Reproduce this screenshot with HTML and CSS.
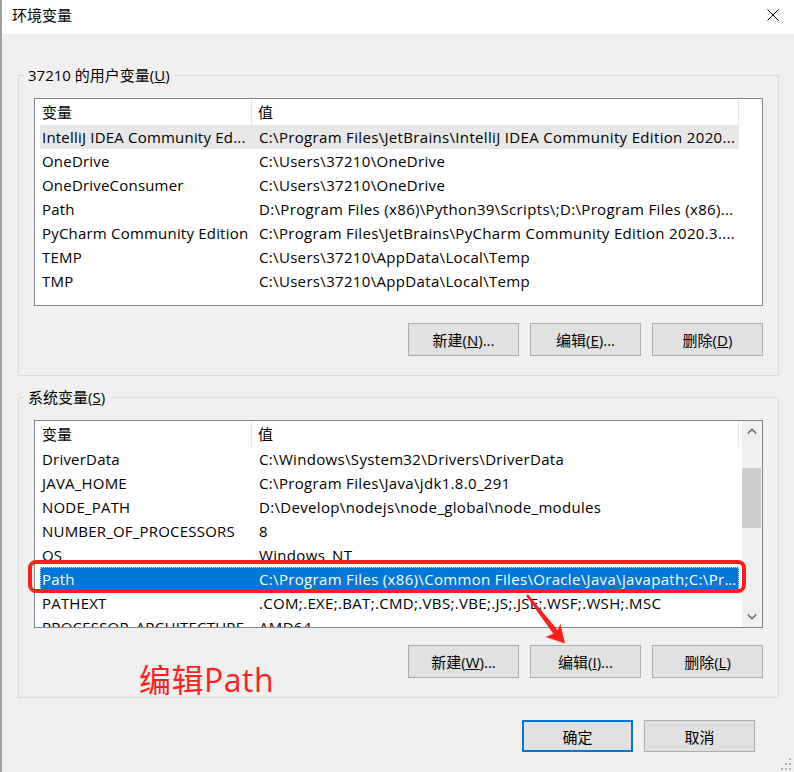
FILE: index.html
```html
<!DOCTYPE html>
<html lang="zh-CN">
<head>
<meta charset="utf-8">
<title>环境变量</title>
<link rel="stylesheet" href="styles.css">
</head>
<body>
<div class="window">
  <div class="titlebar">
    <span class="title">环境变量</span>
    <svg class="close" width="12" height="12" viewBox="0 0 12 12"><path d="M0.5 0.5 L11.5 11.5 M11.5 0.5 L0.5 11.5" stroke="#000" stroke-width="1" fill="none"/></svg>
  </div>
  <div class="content">
    <fieldset class="group">
      <legend>37210 的用户变量(<u>U</u>)</legend>
      <div class="list">
        <div class="list-main">
          <div class="list-head"><div class="hcell c1">变量</div><div class="hcell c2">值</div></div>
          <div class="row inactive"><span class="cell c1">IntelliJ IDEA Community Ed...</span><span class="cell c2">C:\Program Files\JetBrains\IntelliJ IDEA Community Edition 2020...</span></div>
          <div class="row"><span class="cell c1">OneDrive</span><span class="cell c2">C:\Users\37210\OneDrive</span></div>
          <div class="row"><span class="cell c1">OneDriveConsumer</span><span class="cell c2">C:\Users\37210\OneDrive</span></div>
          <div class="row"><span class="cell c1">Path</span><span class="cell c2">D:\Program Files (x86)\Python39\Scripts\;D:\Program Files (x86)...</span></div>
          <div class="row"><span class="cell c1">PyCharm Community Edition</span><span class="cell c2">C:\Program Files\JetBrains\PyCharm Community Edition 2020.3....</span></div>
          <div class="row"><span class="cell c1">TEMP</span><span class="cell c2">C:\Users\37210\AppData\Local\Temp</span></div>
          <div class="row"><span class="cell c1">TMP</span><span class="cell c2">C:\Users\37210\AppData\Local\Temp</span></div>
        </div>
      </div>
      <div class="btns">
        <button class="btn">新建(<u>N</u>)...</button>
        <button class="btn">编辑(<u>E</u>)...</button>
        <button class="btn">删除(<u>D</u>)</button>
      </div>
    </fieldset>

    <fieldset class="group group2">
      <legend>系统变量(<u>S</u>)</legend>
      <div class="list">
        <div class="list-main">
          <div class="list-head"><div class="hcell c1">变量</div><div class="hcell c2">值</div></div>
          <div class="row"><span class="cell c1">DriverData</span><span class="cell c2">C:\Windows\System32\Drivers\DriverData</span></div>
          <div class="row"><span class="cell c1">JAVA_HOME</span><span class="cell c2">C:\Program Files\Java\jdk1.8.0_291</span></div>
          <div class="row"><span class="cell c1">NODE_PATH</span><span class="cell c2">D:\Develop\nodejs\node_global\node_modules</span></div>
          <div class="row"><span class="cell c1">NUMBER_OF_PROCESSORS</span><span class="cell c2">8</span></div>
          <div class="row"><span class="cell c1">OS</span><span class="cell c2">Windows_NT</span></div>
          <div class="row selected"><span class="cell c1">Path</span><span class="cell c2">C:\Program Files (x86)\Common Files\Oracle\Java\javapath;C:\Pr...</span></div>
          <div class="row"><span class="cell c1">PATHEXT</span><span class="cell c2">.COM;.EXE;.BAT;.CMD;.VBS;.VBE;.JS;.JSE;.WSF;.WSH;.MSC</span></div>
          <div class="row"><span class="cell c1">PROCESSOR_ARCHITECTURE</span><span class="cell c2">AMD64</span></div>
        </div>
        <div class="scrollbar">
          <div class="sb-btn"><svg width="10" height="6" viewBox="0 0 10 6"><path d="M0.8 5.4 L5 1.2 L9.2 5.4" stroke="#606060" stroke-width="1.4" fill="none"/></svg></div>
          <div class="sb-track"><div class="sb-thumb"></div></div>
          <div class="sb-btn"><svg width="10" height="6" viewBox="0 0 10 6"><path d="M0.8 0.6 L5 4.8 L9.2 0.6" stroke="#606060" stroke-width="1.4" fill="none"/></svg></div>
        </div>
      </div>
      <div class="btns">
        <button class="btn">新建(<u>W</u>)...</button>
        <button class="btn">编辑(<u>I</u>)...</button>
        <button class="btn">删除(<u>L</u>)</button>
      </div>
    </fieldset>

    <div class="footer">
      <button class="btn btn-foot primary">确定</button>
      <button class="btn btn-foot">取消</button>
    </div>
  </div>

  <div class="anno-box"></div>
  <svg class="anno-arrow" width="56" height="60" viewBox="520 588 56 60"><polygon points="526,595.8 553.3,633.8 545.6,637 565,643.5 560.4,624 557.7,630.3 528,594.2" fill="#ff1f1f"/></svg>
  <div class="anno-text">编辑Path</div>
  <svg class="grip" width="12" height="12" viewBox="0 0 12 12" fill="#b4b4b4">
    <rect x="10" y="0" width="2" height="2"/>
    <rect x="6" y="5" width="2" height="2"/><rect x="10" y="5" width="2" height="2"/>
    <rect x="2" y="10" width="2" height="2"/><rect x="6" y="10" width="2" height="2"/><rect x="10" y="10" width="2" height="2"/>
  </svg>
</div>
</body>
</html>
```

FILE: styles.css
```css
html, body {
  margin: 0;
  padding: 0;
}
body {
  background: #f0f0f0;
  font-family: "Open Sans", "Noto Sans CJK SC", sans-serif;
  font-size: 15px;
  color: #000;
}
.window {
  position: relative;
  width: 794px;
  height: 772px;
  box-sizing: border-box;
  padding-left: 2px;
  background: #f0f0f0;
  overflow: hidden;
}
.window::before {
  content: "";
  position: absolute;
  left: 0;
  top: 0;
  bottom: 0;
  width: 2px;
  background: #a0a0a0;
}
.titlebar {
  height: 34px;
  box-sizing: border-box;
  background: #fff;
  display: flex;
  align-items: center;
  justify-content: space-between;
  padding: 0 15px 4px 10px;
}
.title {
  font-family: "Noto Sans CJK SC", sans-serif;
  font-size: 15px;
  line-height: 20px;
}
.close {
  display: block;
}
.content {
  padding: 31px 15px 0 16px;
}
.group {
  margin: 0;
  padding: 13px 15px 19px 15px;
  border: 1px solid #dcdcdc;
  min-inline-size: 0;
}
.group legend {
  padding: 0 4px;
  margin-left: -10px;
  line-height: 20px;
  height: 20px;
}
.group2 {
  margin-top: 11px;
}
.list {
  height: 208px;
  box-sizing: border-box;
  border: 1px solid #828790;
  background: #fff;
  display: flex;
  overflow: hidden;
}
.list-main {
  flex: 1;
  overflow: hidden;
}
.list-head {
  display: flex;
  height: 26px;
}
.hcell {
  box-sizing: border-box;
  height: 26px;
  line-height: 26px;
  border-right: 1px solid #e5e5e5;
  white-space: nowrap;
}
.hcell.c1 {
  width: 217px;
  padding-left: 7px;
}
.hcell.c2 {
  width: 487px;
  padding-left: 6px;
}
.row {
  display: flex;
  align-items: center;
  height: 24px;
  width: 699px;
  margin-left: 5px;
  box-sizing: border-box;
}
.cell {
  white-space: nowrap;
  overflow: hidden;
  text-overflow: ellipsis;
  box-sizing: border-box;
  line-height: 24px;
  letter-spacing: 0.33px;
}
.cell.c1 {
  width: 212px;
  padding-left: 2px;
  padding-right: 0;
  letter-spacing: 0.2px;
}
.cell.c2 {
  width: 487px;
  padding-left: 7px;
  padding-right: 2px;
}
.row.inactive {
  background: #e8e8e8;
}
.row.selected {
  background: #0078d7;
  color: #fff;
  outline: 1px dotted rgba(255, 255, 255, 0.75);
  outline-offset: -1px;
}
.scrollbar {
  width: 20px;
  background: #f0f0f0;
  display: flex;
  flex-direction: column;
}
.sb-btn {
  height: 20px;
  display: flex;
  align-items: center;
  justify-content: center;
}
.sb-btn svg {
  display: block;
}
.sb-track {
  flex: 1;
  padding-top: 27px;
}
.sb-thumb {
  height: 60px;
  margin-right: 1px;
  background: #cdcdcd;
}
.btns {
  display: flex;
  justify-content: flex-end;
  gap: 11px;
  margin-top: 17px;
}
.btn {
  width: 111px;
  height: 33px;
  box-sizing: border-box;
  margin: 0;
  padding: 0;
  background: #e1e1e1;
  border: 1px solid #adadad;
  font-family: "Open Sans", "Noto Sans CJK SC", sans-serif;
  font-size: 15px;
  color: #000;
}
.footer {
  display: flex;
  justify-content: flex-end;
  gap: 11px;
  margin-top: 22px;
  padding-right: 24px;
}
.btn-foot {
  height: 32px;
}
.btn.primary {
  border: 2px solid #0078d7;
}
.anno-box {
  position: absolute;
  left: 28px;
  top: 560px;
  width: 718px;
  height: 33px;
  box-sizing: border-box;
  border: 4px solid #ff1f1f;
  border-radius: 8px;
}
.anno-arrow {
  position: absolute;
  left: 520px;
  top: 588px;
}
.anno-text {
  position: absolute;
  left: 139px;
  top: 664px;
  font-family: "Open Sans", "Noto Sans CJK SC", sans-serif;
  font-size: 32px;
  line-height: 32px;
  letter-spacing: 0.5px;
  color: #ff1f1f;
}
.grip {
  position: absolute;
  left: 779px;
  top: 758px;
}
```
